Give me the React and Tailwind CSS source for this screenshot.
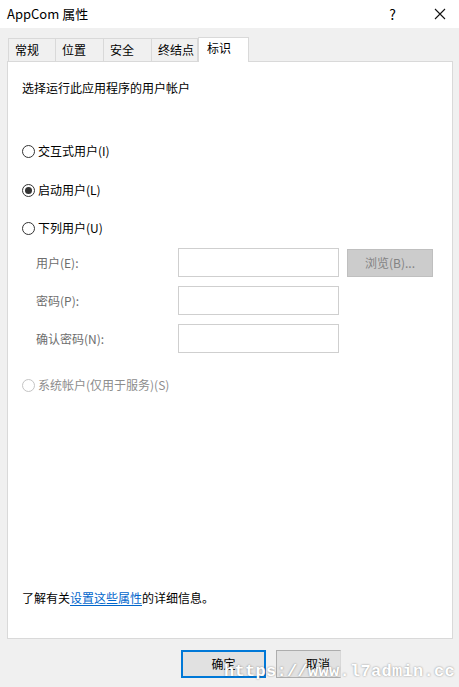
import React from 'react'

const font = { fontFamily: '"Noto Sans CJK SC", "Liberation Sans", sans-serif' }

const Radio = ({ checked, disabled, label }) => (
    <div className="flex items-center h-4">
        <span
            className={`w-[13px] h-[13px] rounded-full border flex items-center justify-center bg-white ${
                disabled ? 'border-[#c4c4c4]' : 'border-[#333333]'
            }`}
        >
            {checked && <span className="w-[7px] h-[7px] rounded-full bg-[#333333]" />}
        </span>
        <span className={`ml-[3px] ${disabled ? 'text-[#8d8d8d]' : 'text-black'}`}>{label}</span>
    </div>
)

const Tab = ({ label, active }) =>
    active ? (
        <div className="w-[51px] h-[25px] -mb-px bg-white border border-b-0 border-[#d9d9d9] pl-[8px] pt-[2px] z-10 text-black">
            {label}
        </div>
    ) : (
        <div className="h-[23px] border border-b-0 border-r-0 border-[#d9d9d9] bg-[#f0f0f0] pl-[6px] pt-[3px] text-black">
            {label}
        </div>
    )

const Field = ({ label, children }) => (
    <div className="flex items-start h-[29px]">
        <div className="w-[142px] ml-[14px] h-[29px] flex items-center text-[#6d6d6d]">{label}</div>
        <div className="w-[161px] h-[29px] border border-[#cfcfcf] bg-white" />
        {children}
    </div>
)

export default function App() {
    return (
        <div className="w-[459px] h-[687px] bg-[#f0f0f0] flex flex-col text-[12px] leading-4 relative overflow-hidden" style={font}>
            {/* 标题栏 */}
            <div className="h-[28px] bg-white flex items-center">
                <span className="ml-[7px] text-[13px] text-black">AppCom 属性</span>
                <span className="ml-auto mr-[38px] text-[14px] text-black">?</span>
                <svg className="mr-[13px]" width="12" height="12" viewBox="0 0 12 12">
                    <path d="M1 1L11 11M11 1L1 11" stroke="#111" strokeWidth="1.1" />
                </svg>
            </div>

            {/* 选项卡 */}
            <div className="flex items-end ml-[8px] mt-[9px]">
                <div className="w-[47px]"><Tab label="常规" /></div>
                <div className="w-[48px]"><Tab label="位置" /></div>
                <div className="w-[48px]"><Tab label="安全" /></div>
                <div className="w-[47px] border-r border-[#d9d9d9]"><Tab label="终结点" /></div>
                <Tab label="标识" active />
            </div>

            {/* 内容面板 */}
            <div className="mx-[7px] w-[446px] h-[578px] bg-white border border-[#d9d9d9] flex flex-col pl-[14px]">
                <div className="mt-[18px] text-black">选择运行此应用程序的用户帐户</div>
                <div className="mt-[47px]"><Radio label="交互式用户(I)" /></div>
                <div className="mt-[23px]"><Radio label="启动用户(L)" checked /></div>
                <div className="mt-[22px]"><Radio label="下列用户(U)" /></div>

                <div className="mt-[12px] flex flex-col gap-[9px]">
                    <Field label="用户(E):">
                        <div className="ml-[8px] mt-px w-[86px] h-[28px] bg-[#cccccc] border border-[#bfbfbf] flex items-center justify-center text-[#838383]">
                            浏览(B)...
                        </div>
                    </Field>
                    <Field label="密码(P):" />
                    <Field label="确认密码(N):" />
                </div>

                <div className="mt-[24px]"><Radio label="系统帐户(仅用于服务)(S)" disabled /></div>

                <div className="mt-auto mb-[32px] text-black">
                    了解有关<span className="text-[#0066cc] underline underline-offset-2">设置这些属性</span>的详细信息。
                </div>
            </div>

            {/* 按钮 */}
            <div className="flex mt-[11px] ml-[181px] gap-[10px]">
                <div className="w-[85px] h-[28px] border-2 border-[#0078d7] bg-[#e1e1e1] flex items-center justify-center text-black">
                    确定
                </div>
                <div className="w-[65px] h-[28px] border border-[#adadad] border-r-[#d8d8d8] bg-[#e1e1e1] flex items-center pl-[29px] text-black">
                    取消
                </div>
            </div>

            {/* 水印 */}
            <div
                className="absolute left-[224px] top-[664px] text-[17px] font-bold text-white tracking-[0.3px] [text-shadow:0_0_2px_rgba(0,0,0,0.45)]"
                style={{ fontFamily: '"Liberation Mono", monospace' }}
            >
                https://www.l7admin.cc
            </div>
        </div>
    )
}
